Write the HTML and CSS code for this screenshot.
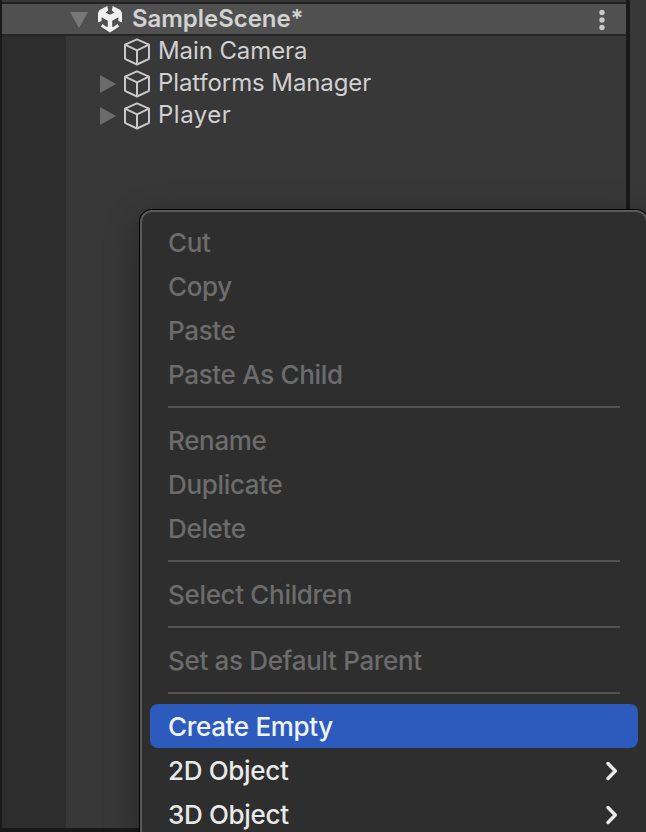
FILE: index.html
```
<!DOCTYPE html>
<html lang="en">
<head>
<meta charset="utf-8">
<title>Hierarchy</title>
<link rel="stylesheet" href="styles.css">
</head>
<body>
<svg class="defs" width="0" height="0" aria-hidden="true">
  <symbol id="cube" viewBox="0 0 28 30"><path d="M14 2.4 26 7.7V21.8L14 27.5 2 21.8V7.7ZM2 7.7 14 13.4 26 7.7M14 13.4V27.5" fill="none" stroke="#c8c8c8" stroke-width="2" stroke-linejoin="round"/></symbol>
  <symbol id="chevron" viewBox="0 0 14 20"><path d="M3 2.5 10.3 10 3 17.5" fill="none" stroke="#eaeaea" stroke-width="3.4" stroke-linecap="round" stroke-linejoin="round"/></symbol>
</svg>
<div class="window">
  <main class="hierarchy">
    <header class="scene">
      <i class="arrow-down"></i>
      <svg class="unity" viewBox="0 0 24 27"><path fill="#f0f0f0" d="M9.3 0 1.5 4 0 7V16.5L3.6 15V11.2L9.8 14.8V21L7.8 20.4 4.5 18 2.8 20.4 12 26.6 21.2 20.4 19.5 18 16.2 20.4 14.2 21V14.8L20.4 11.2V15L24 16.5V7L22.5 4 14.7 0 13.8 4.4 16.4 6.6 12 8.8 7.6 6.6 10.2 4.4Z"/></svg>
      <span class="scene-name">SampleScene*</span>
      <svg class="dots" viewBox="0 0 6 22"><g fill="#c8c8c8"><circle cx="3" cy="3.5" r="2.7"/><circle cx="3" cy="11" r="2.7"/><circle cx="3" cy="18.5" r="2.7"/></g></svg>
    </header>
    <div class="body">
      <div class="gutter"></div>
      <div class="tree">
        <div class="node"><i class="fold"></i><svg class="cube"><use href="#cube"/></svg><span class="label tight">Main Camera</span></div>
        <div class="node"><i class="fold arrow-right"></i><svg class="cube"><use href="#cube"/></svg><span class="label tight">Platforms Manager</span></div>
        <div class="node"><i class="fold arrow-right"></i><svg class="cube"><use href="#cube"/></svg><span class="label">Player</span></div>
      </div>
    </div>
  </main>
  <aside class="side"></aside>
</div>
<nav class="menu">
  <div class="item off">Cut</div>
  <div class="item off">Copy</div>
  <div class="item off">Paste</div>
  <div class="item off">Paste As Child</div>
  <hr>
  <div class="item off">Rename</div>
  <div class="item off">Duplicate</div>
  <div class="item off">Delete</div>
  <hr>
  <div class="item off">Select Children</div>
  <hr>
  <div class="item off">Set as Default Parent</div>
  <hr>
  <div class="item active">Create Empty</div>
  <div class="item">2D Object<svg class="chevron"><use href="#chevron"/></svg></div>
  <div class="item">3D Object<svg class="chevron"><use href="#chevron"/></svg></div>
</nav>
</body>
</html>
```
FILE: styles.css
```
* { box-sizing: border-box; }
body {
  margin: 0;
  width: 646px;
  height: 832px;
  overflow: hidden;
  position: relative;
  background: #191919;
  font-family: Inter, "Liberation Sans", sans-serif;
}
.defs { position: absolute; }
.window {
  display: flex;
  height: 828px;
  padding-left: 2px;
}
.hierarchy {
  width: 624px;
  display: flex;
  flex-direction: column;
  background: #383838;
  padding-top: 2px;
}
.side {
  width: 16px;
  height: 832px;
  margin-left: 4px;
  background: #383838;
}
.scene {
  flex: none;
  height: 34px;
  display: flex;
  align-items: center;
  background: #505050;
  border-top: 2px solid #222;
  border-bottom: 2px solid #252525;
  padding: 0 21px 0 68px;
}
.arrow-down {
  width: 18px;
  height: 16px;
  margin-top: 2px;
  background: #787878;
  clip-path: polygon(0 0, 100% 0, 50% 100%);
}
.unity { width: 24px; height: 27px; margin: 1px 0 0 10px; }
.scene-name {
  margin-left: 10px;
  font-size: 24px;
  line-height: 30px;
  font-weight: 600;
  letter-spacing: -.05px;
  color: #d2d2d2;
}
.dots { width: 6px; height: 22px; margin: 1px 0 0 auto; }
.body { flex: 1; display: flex; }
.gutter { width: 64px; background: #2d2d2d; }
.tree { padding: 0 0 0 34px; }
.node { height: 32px; display: flex; align-items: center; }
.fold { width: 16px; height: 18px; }
.arrow-right { background: #6b6b6b; clip-path: polygon(0 0, 100% 50%, 0 100%); }
.cube { width: 28px; height: 30px; margin-left: 7px; }
.label {
  margin: -3px 0 0 7px;
  font-size: 24px;
  line-height: 30px;
  color: #d0d0d0;
  letter-spacing: .5px;
}
.label.tight { letter-spacing: -.1px; }
.menu {
  position: absolute;
  left: 140px;
  top: 210px;
  width: 508px;
  height: 640px;
  padding: 8px 8px 0;
  background: #2e2e2e;
  border: 2px solid #5a5a5a;
  border-radius: 12px;
  box-shadow: 0 0 0 1px #000, 0 10px 36px rgba(0, 0, 0, .32);
}
.item {
  height: 44px;
  padding: 2px 19px 0 18px;
  display: flex;
  align-items: center;
  justify-content: space-between;
  font-size: 26px;
  line-height: 42px;
  font-weight: 500;
  letter-spacing: -.33px;
  color: #e9e9e9;
}
.off { color: #6c6c6c; }
.active { background: #2d5bbd; color: #f0f3fa; border-radius: 8px; }
.menu hr { height: 2px; margin: 10px 18px; border: 0; background: #535353; }
.chevron { width: 14px; height: 20px; }
```
